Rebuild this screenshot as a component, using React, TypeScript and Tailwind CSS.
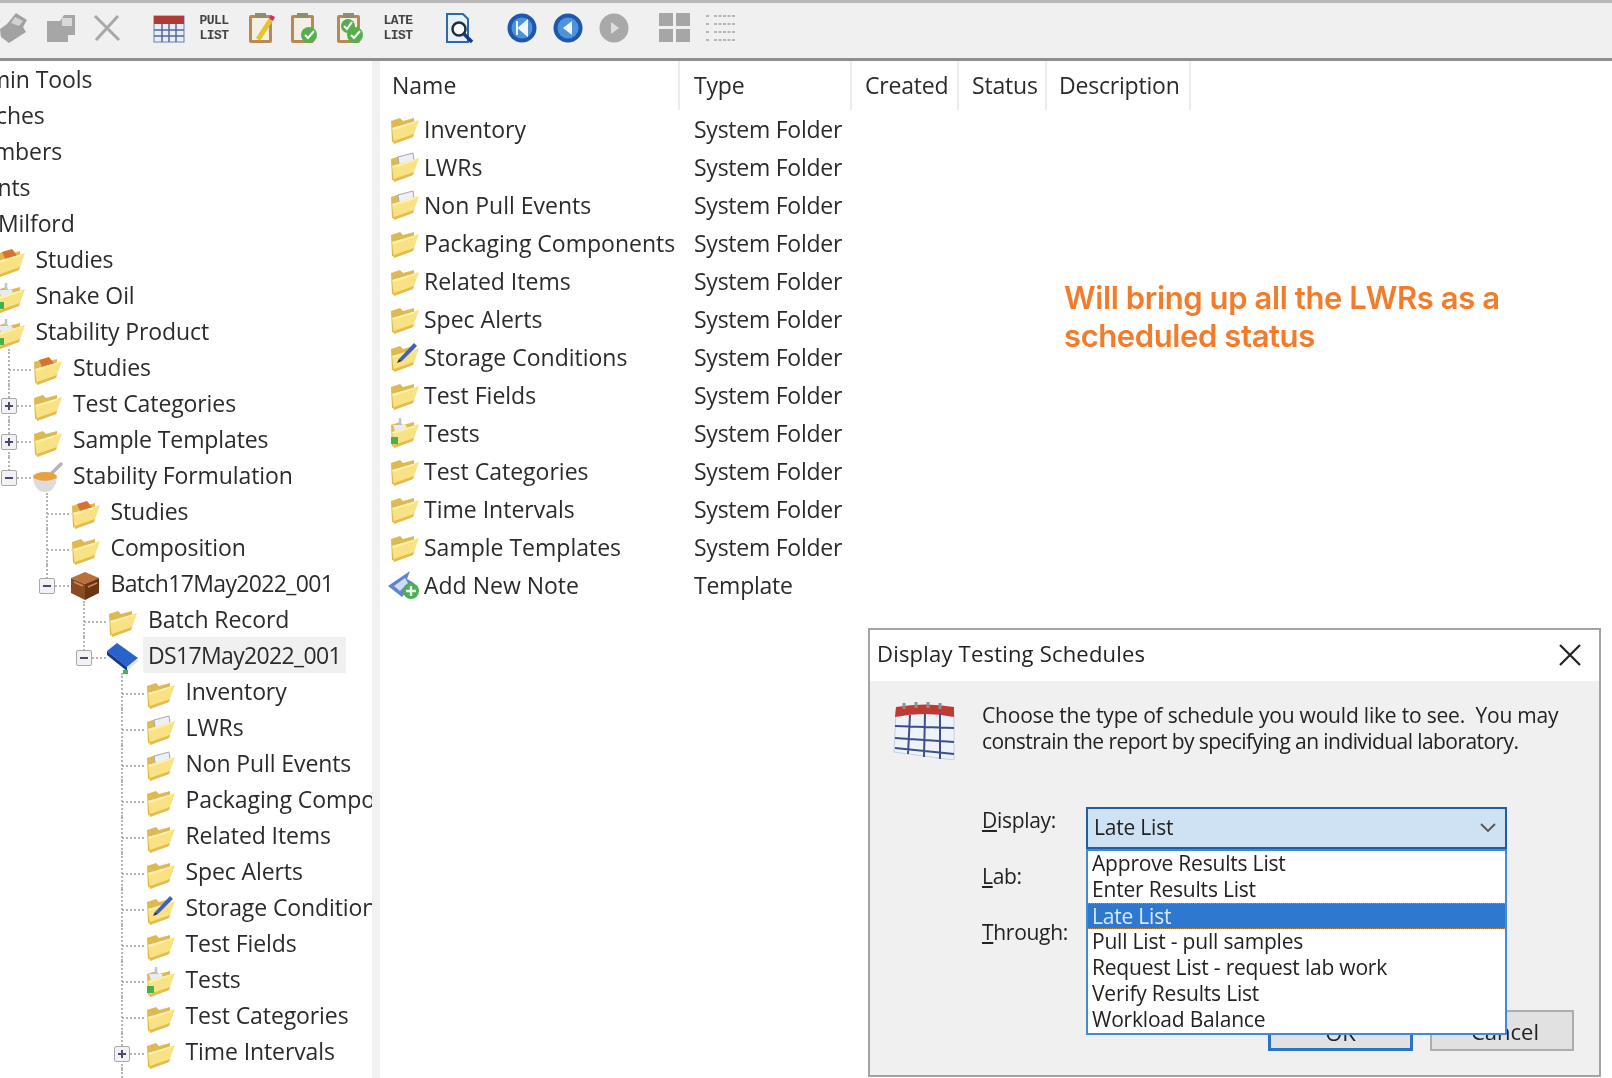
import type { ReactNode } from 'react';

type FolderKind = 'plain' | 'doc' | 'pen' | 'tests' | 'studies';
type IconKind = FolderKind | 'batch' | 'book' | 'mortar' | 'note';

type TreeRow = {
  label: string;
  level: number;
  icon?: IconKind;
  toggle?: '+' | '-';
  line?: 'full' | 'half' | 'none';
  selected?: boolean;
};

const tree: TreeRow[] = [
  { label: 'Admin Tools', level: -2, line: 'none' },
  { label: 'Batches', level: -2, line: 'none' },
  { label: 'Members', level: -2, line: 'none' },
  { label: 'Events', level: -2, line: 'none' },
  { label: 'Milford', level: -1, line: 'none' },
  { label: 'Studies', level: 0, icon: 'studies', line: 'none' },
  { label: 'Snake Oil', level: 0, icon: 'tests', line: 'none' },
  { label: 'Stability Product', level: 0, icon: 'tests', line: 'none' },
  { label: 'Studies', level: 1, icon: 'studies' },
  { label: 'Test Categories', level: 1, icon: 'plain', toggle: '+' },
  { label: 'Sample Templates', level: 1, icon: 'plain', toggle: '+' },
  { label: 'Stability Formulation', level: 1, icon: 'mortar', toggle: '-', line: 'half' },
  { label: 'Studies', level: 2, icon: 'studies' },
  { label: 'Composition', level: 2, icon: 'plain' },
  { label: 'Batch17May2022_001', level: 2, icon: 'batch', toggle: '-', line: 'half' },
  { label: 'Batch Record', level: 3, icon: 'plain' },
  { label: 'DS17May2022_001', level: 3, icon: 'book', toggle: '-', line: 'half', selected: true },
  { label: 'Inventory', level: 4, icon: 'plain' },
  { label: 'LWRs', level: 4, icon: 'doc' },
  { label: 'Non Pull Events', level: 4, icon: 'doc' },
  { label: 'Packaging Components', level: 4, icon: 'plain' },
  { label: 'Related Items', level: 4, icon: 'plain' },
  { label: 'Spec Alerts', level: 4, icon: 'plain' },
  { label: 'Storage Conditions', level: 4, icon: 'pen' },
  { label: 'Test Fields', level: 4, icon: 'plain' },
  { label: 'Tests', level: 4, icon: 'tests' },
  { label: 'Test Categories', level: 4, icon: 'plain' },
  { label: 'Time Intervals', level: 4, icon: 'plain', toggle: '+' },
  { label: 'Sample Templates', level: 4, icon: 'plain' },
];

const listRows: { name: string; type: string; icon: IconKind }[] = [
  { name: 'Inventory', type: 'System Folder', icon: 'plain' },
  { name: 'LWRs', type: 'System Folder', icon: 'doc' },
  { name: 'Non Pull Events', type: 'System Folder', icon: 'doc' },
  { name: 'Packaging Components', type: 'System Folder', icon: 'plain' },
  { name: 'Related Items', type: 'System Folder', icon: 'plain' },
  { name: 'Spec Alerts', type: 'System Folder', icon: 'plain' },
  { name: 'Storage Conditions', type: 'System Folder', icon: 'pen' },
  { name: 'Test Fields', type: 'System Folder', icon: 'plain' },
  { name: 'Tests', type: 'System Folder', icon: 'tests' },
  { name: 'Test Categories', type: 'System Folder', icon: 'plain' },
  { name: 'Time Intervals', type: 'System Folder', icon: 'plain' },
  { name: 'Sample Templates', type: 'System Folder', icon: 'plain' },
  { name: 'Add New Note', type: 'Template', icon: 'note' },
];

const scheduleOptions = [
  'Approve Results List',
  'Enter Results List',
  'Late List',
  'Pull List - pull samples',
  'Request List - request lab work',
  'Verify Results List',
  'Workload Balance',
];

// 32x32 tree / list icons
const RowIcon = ({ kind }: { kind: IconKind }) => {
  if (kind === 'batch') {
    return (
      <svg viewBox="0 0 32 32" className="h-8 w-8 shrink-0">
        <path d="M2 8 L16 2 L30 8 L16 14 Z" fill="#b9703a" />
        <path d="M2 8 L16 14 V30 L2 23 Z" fill="#8a4a20" />
        <path d="M30 8 L16 14 V30 L30 23 Z" fill="#6b3413" />
        <path d="M5 12 L14 16 M19 17 L28 13" stroke="#c98a56" strokeWidth="1.5" />
      </svg>
    );
  }
  if (kind === 'book') {
    return (
      <svg viewBox="0 0 32 32" className="h-8 w-8 shrink-0">
        <path d="M1 9 L11 1 L32 16 L21 25 Z" fill="#2a62c9" />
        <path d="M1 9 L21 25 L21 29 L1 13 Z" fill="#123a8c" />
        <path d="M21 25 L32 16 V19 L21 29 Z" fill="#dfe6f2" />
        <rect x="17" y="28" width="5" height="4" fill="#46b04a" />
      </svg>
    );
  }
  if (kind === 'mortar') {
    return (
      <svg viewBox="0 0 32 32" className="h-8 w-8 shrink-0">
        <path d="M19 13 L30 2" stroke="#b5b5b5" strokeWidth="3.5" strokeLinecap="round" />
        <ellipse cx="14" cy="15" rx="12" ry="5" fill="#e9a13f" />
        <path d="M2 15 C3 26 8 30 14 30 C20 30 25 26 26 15 C22 20 6 20 2 15 Z" fill="#dcdcdc" />
      </svg>
    );
  }
  if (kind === 'note') {
    return (
      <svg viewBox="0 0 32 32" className="h-8 w-8 shrink-0">
        <path d="M0 17 L22 2 L19 10 L26 14 L14 28 Z" fill="#5f86c9" />
        <path d="M6 17 L17 9 L20 14 L12 22 Z" fill="#cfdcf2" />
        <circle cx="23" cy="22" r="8" fill="#4fae52" />
        <path d="M23 17 V27 M18 22 H28" stroke="#e8f7e8" strokeWidth="2.4" />
      </svg>
    );
  }
  return (
    <svg viewBox="0 0 32 32" className="h-8 w-8 shrink-0">
      <path d="M3 8 L12 5 L15 8 L26 5 V13 L7 30 L4 29 Z" fill="#dfb850" />
      {kind === 'doc' && <path d="M10 6 L25 2 L27 16 L12 20 Z" fill="#eef0f4" stroke="#a8a8b0" strokeWidth="1" />}
      {kind === 'tests' && (
        <>
          <path d="M12 1 V14" stroke="#b8c4de" strokeWidth="2.5" />
          <path d="M5 8 L18 8 L20 16 L8 18 Z" fill="#e6ecf6" />
        </>
      )}
      {kind === 'studies' && <path d="M8 6 L18 3 L26 13 L14 19 Z" fill="#d9722a" />}
      <path d="M4 15 L11 13 L31 7 L25 24 L6 31 Z" fill="#f8e283" />
      <path d="M4 15 L11 13 L28 8 L27 10 L6 17 Z" fill="#fdf0ad" />
      <path d="M6 31 L25 24 L26 21 L6 28 Z" fill="#e6bb4b" />
      {kind === 'tests' && <rect x="3" y="20" width="7" height="7" fill="#46b04a" />}
      {kind === 'pen' && (
        <>
          <path d="M11 18 L26 2 L29 5 L14 20 Z" fill="#3f62b8" />
          <path d="M11 18 L9 22 L14 20 Z" fill="#222a4a" />
        </>
      )}
    </svg>
  );
};

const Toggle = ({ sign }: { sign: '+' | '-' }) => (
  <span className="absolute top-[13px] flex h-4 w-4 -translate-x-1/2 items-center justify-center rounded-[2px] border border-[#a9a9a9] bg-[#f2f2f4]">
    <span className="relative h-[2px] w-2 bg-[#4a4a70]">
      {sign === '+' && <span className="absolute left-[3px] top-[-3px] h-2 w-[2px] bg-[#4a4a70]" />}
    </span>
  </span>
);

const TreeItem = ({ row }: { row: TreeRow }) => {
  const iconLeft = 31 + (row.level - 1) * 37.5;
  const guideX = 9 + (row.level - 1) * 37.5;
  const line = row.line ?? 'full';
  const hasDigits = /\d/.test(row.label);
  return (
    <div className="relative flex h-9 shrink-0 items-center whitespace-nowrap">
      {line !== 'none' && (
        <>
          <span
            className={`absolute w-0 border-l-2 border-dotted border-[#b5b5b5] ${line === 'half' ? 'top-0 h-[18px]' : 'inset-y-0'}`}
            style={{ left: guideX - 1 }}
          />
          <span
            className="absolute top-[20px] h-0 border-t-2 border-dotted border-[#b5b5b5]"
            style={{ left: guideX, width: iconLeft - guideX }}
          />
        </>
      )}
      {row.toggle && (
        <span className="absolute inset-y-0" style={{ left: guideX }}>
          <Toggle sign={row.toggle} />
        </span>
      )}
      <div className="flex items-center" style={{ marginLeft: row.icon ? iconLeft : iconLeft + 32 }}>
        {row.icon && (
          <span className="mt-[5px]">
            <RowIcon kind={row.icon} />
          </span>
        )}
        <span
          className={`ml-[5px] h-9 px-[5px] leading-9 ${hasDigits ? 'tracking-[-0.65px]' : 'tracking-[-0.1px]'} ${
            row.selected ? 'bg-[#f0f0f0]' : ''
          }`}
        >
          {row.label}
        </span>
      </div>
    </div>
  );
};

const GreyStamp = () => (
  <svg viewBox="0 0 30 32" className="h-8 w-[30px]">
    <path d="M1 17 L8 12 L17 1 L28 8 L24 15 L27 20 L10 31 L2 25 Z" fill="#a2a2a2" />
    <path d="M16 5 L24 9 L20 14 L12 11 Z" fill="#d2d2d2" />
  </svg>
);

const GreyPaste = () => (
  <svg viewBox="0 0 32 30" className="h-[30px] w-8">
    <path d="M1 8 H14 L18 2 H29 V22 H22 V29 H1 Z" fill="#a6a6a6" />
    <path d="M16 5 H26 V13 H16 Z" fill="#d8d8d8" />
  </svg>
);

const GreyX = () => (
  <svg viewBox="0 0 28 28" className="h-[28px] w-[28px]">
    <path d="M2 2 L26 26 M25 2 L3 26" stroke="#a8a8a8" strokeWidth="3" />
  </svg>
);

const CalendarSmall = () => (
  <svg viewBox="0 0 32 30" className="h-[30px] w-8">
    <rect x="1" y="3" width="30" height="26" fill="#e8eef8" stroke="#6a7fb0" />
    <rect x="1" y="3" width="30" height="8" fill="#b23a34" />
    <path d="M1 17 H31 M1 23 H31 M9 11 V29 M16 11 V29 M23 11 V29" stroke="#55689c" strokeWidth="1.5" />
  </svg>
);

const Clipboard = ({ badge }: { badge: 'pen' | 'check' | 'double' }) => (
  <svg viewBox="0 0 30 32" className="h-8 w-[30px]">
    <rect x="2" y="3" width="23" height="28" rx="2" fill="#b58a55" />
    <rect x="5" y="6" width="17" height="22" fill="#f3efe2" />
    <rect x="8" y="1" width="11" height="5" fill="#8d8d70" />
    {badge === 'pen' && <path d="M9 26 L22 6 L26 9 L13 29 Z" fill="#e6c22c" />}
    {badge === 'pen' && <path d="M22 6 L26 9 L28 5 L24 3 Z" fill="#c9326a" />}
    {badge !== 'pen' && <circle cx="20" cy="23" r="8" fill="#57ad4f" />}
    {badge !== 'pen' && <path d="M16 23 L19 26 L25 19" stroke="#fff" strokeWidth="2" fill="none" />}
    {badge === 'double' && <circle cx="13" cy="14" r="7" fill="#57ad4f" />}
    {badge === 'double' && <path d="M9 14 L12 17 L17 10" stroke="#fff" strokeWidth="2" fill="none" />}
  </svg>
);

const Magnifier = () => (
  <svg viewBox="0 0 30 32" className="h-8 w-[30px]">
    <path d="M2 2 H18 L23 7 V30 H2 Z" fill="#e9f0f8" stroke="#2b6aa8" strokeWidth="2" />
    <circle cx="14" cy="17" r="6.5" fill="#fff" stroke="#1c2f4a" strokeWidth="2.5" />
    <path d="M19 22 L27 30" stroke="#173a86" strokeWidth="3.5" />
  </svg>
);

const NavCircle = ({ kind }: { kind: 'first' | 'back' | 'next' }) => (
  <svg viewBox="0 0 30 30" className="h-[30px] w-[30px]">
    <circle cx="15" cy="15" r="14.5" fill={kind === 'next' ? '#a9a9a9' : '#1f57ad'} />
    {kind !== 'next' && <circle cx="15" cy="15" r="10.5" fill="#4b94dc" />}
    {kind === 'first' && <path d="M10 8 V22 M20 8 L12 15 L20 22 Z" stroke="#f2f6fc" strokeWidth="2" fill="#f2f6fc" />}
    {kind === 'back' && <path d="M19 8 L10 15 L19 22 Z" fill="#f2f6fc" />}
    {kind === 'next' && <path d="M12 9 L20 15 L12 21 Z" fill="#dcdcdc" />}
  </svg>
);

const GridIcon = () => (
  <svg viewBox="0 0 32 30" className="h-[30px] w-8" fill="#a6a6a6">
    <rect x="0" y="0" width="14" height="13" />
    <rect x="17" y="0" width="14" height="13" />
    <rect x="0" y="16" width="14" height="13" />
    <rect x="17" y="16" width="14" height="13" />
  </svg>
);

const ListIcon = () => (
  <svg viewBox="0 0 32 30" className="h-[30px] w-8" stroke="#b5b5b5" strokeWidth="2" strokeDasharray="3 1.5">
    <path d="M1 3 H5 M9 3 H31 M1 11 H5 M9 11 H31 M1 19 H5 M9 19 H31 M1 27 H5 M9 27 H31" />
  </svg>
);

const ToolLabel = ({ top, bottom }: { top: string; bottom: string }) => (
  <div className="flex w-[30px] flex-col items-center font-['Liberation_Mono',monospace] text-[13px] font-bold leading-[15px] tracking-[-0.5px] text-[#444]">
    <span>{top}</span>
    <span>{bottom}</span>
  </div>
);

const Tool = ({ className, children }: { className: string; children: ReactNode }) => (
  <div className={`flex shrink-0 items-center ${className}`}>{children}</div>
);

const CalendarLarge = () => (
  <svg viewBox="0 0 66 58" className="h-[58px] w-[66px]">
    <path d="M4 9 H62 V58 L2 50 Z" fill="#eef3fa" stroke="#c3cfe2" />
    <path d="M4 5 Q33 0 62 5 V15 Q33 9 3 15 Z" fill="#bf3a33" />
    <path d="M12 1 V7 M24 0 V6 M36 0 V6 M48 1 V7" stroke="#8f8f8f" strokeWidth="3" />
    <path d="M3 24 L62 26 M3 36 L62 40 M3 46 L62 52 M18 13 L16 52 M33 12 L32 55 M48 12 L48 57" stroke="#3d4f86" strokeWidth="2" />
  </svg>
);

const Dialog = () => (
  <div className="absolute left-[868px] top-[628px] flex h-[449px] w-[733px] flex-col border-2 border-[#a3a3a3] bg-[#f0f0f0] font-['Open_Sans',sans-serif] text-[#222]">
    <div className="flex h-[51px] shrink-0 items-center justify-between bg-white pb-[4px] pl-[7px] pr-[17px]">
      <span className="text-[22px] tracking-[0.2px]">Display Testing Schedules</span>
      <svg viewBox="0 0 24 24" className="mt-[2px] h-6 w-6" stroke="#222" strokeWidth="2.2">
        <path d="M2 2 L22 22 M22 2 L2 22" />
      </svg>
    </div>
    <div className="flex grow flex-col pb-[24px] pl-[22px] pr-[25px] pt-[21px]">
      <div className="flex">
        <CalendarLarge />
        <div className="ml-[24px] flex flex-col whitespace-pre text-[21px] leading-[26px] text-[#222]">
          <span className="tracking-[-0.2px]">Choose the type of schedule you would like to see.  You may</span>
          <span className="tracking-[-0.58px]">constrain the report by specifying an individual laboratory.</span>
        </div>
      </div>
      <div className="ml-[90px] mt-[46px] flex">
        <div className="flex w-[104px] flex-col gap-[28px] text-[21px] leading-[28px] tracking-[-0.3px]">
          <span><span className="underline">D</span>isplay:</span>
          <span><span className="underline">L</span>ab:</span>
          <span><span className="underline">T</span>hrough:</span>
        </div>
        <div className="relative mt-[1px] w-[421px]">
          <div className="flex h-[42px] items-center justify-between border-2 border-[#1d5ea6] bg-[#cfe2f3] pl-[6px] pr-[8px] text-[21px] tracking-[-0.2px]">
            <span>Late List</span>
            <svg viewBox="0 0 18 12" className="h-3 w-[18px]" stroke="#555" strokeWidth="1.8" fill="none">
              <path d="M2 2 L9 9 L16 2" />
            </svg>
          </div>
          <div className="absolute left-0 top-[42px] z-10 w-full border-2 border-[#3f8ad9] bg-white">
            {scheduleOptions.map((option) => (
              <div
                key={option}
                className={`h-[26px] whitespace-nowrap pl-[4px] text-[21px] leading-[25px] tracking-[-0.2px] ${
                  option === 'Late List' ? 'border-y border-dotted border-[#c98d3c] bg-[#2f78cf] text-[#dbe9fa]' : ''
                }`}
              >
                {option}
              </div>
            ))}
          </div>
        </div>
      </div>
      <div className="mt-auto flex justify-end gap-[17px]">
        <div className="flex h-[41px] w-[145px] items-center justify-center border-[3px] border-[#2a73c8] bg-[#e1e1e1] pt-[3px] text-[22px]">OK</div>
        <div className="flex h-[41px] w-[144px] items-center justify-center border-2 border-[#adadad] bg-[#e1e1e1] pl-[6px] pt-[2px] text-[22px]">Cancel</div>
      </div>
    </div>
  </div>
);

export default function App() {
  return (
    <div className="relative flex h-[1078px] w-[1612px] flex-col overflow-hidden bg-white font-['Open_Sans',sans-serif] text-[#2b2b2b] blur-[0.4px]">
      {/* toolbar */}
      <header className="flex h-[61px] shrink-0 items-center border-b-[3px] border-t-[3px] border-b-[#8f8f8f] border-t-[#b9b9b9] bg-[#f0f0f0] pb-[6px]">
        <Tool className="ml-[-1px]"><GreyStamp /></Tool>
        <Tool className="ml-[17px]"><GreyPaste /></Tool>
        <Tool className="ml-[15px]"><GreyX /></Tool>
        <Tool className="ml-[32px]"><CalendarSmall /></Tool>
        <Tool className="ml-[14px]"><ToolLabel top="PULL" bottom="LIST" /></Tool>
        <Tool className="ml-[18px]"><Clipboard badge="pen" /></Tool>
        <Tool className="ml-[12px]"><Clipboard badge="check" /></Tool>
        <Tool className="ml-[16px]"><Clipboard badge="double" /></Tool>
        <Tool className="ml-[18px]"><ToolLabel top="LATE" bottom="LIST" /></Tool>
        <Tool className="ml-[32px]"><Magnifier /></Tool>
        <Tool className="ml-[32px]"><NavCircle kind="first" /></Tool>
        <Tool className="ml-[16px]"><NavCircle kind="back" /></Tool>
        <Tool className="ml-[16px]"><NavCircle kind="next" /></Tool>
        <Tool className="ml-[30px]"><GridIcon /></Tool>
        <Tool className="ml-[14px]"><ListIcon /></Tool>
      </header>

      <div className="flex min-h-0 grow">
        {/* tree */}
        <nav className="flex w-[372px] shrink-0 flex-col overflow-hidden text-[23px]">
          {tree.map((row, i) => (
            <TreeItem key={i} row={row} />
          ))}
        </nav>
        <div className="w-2 shrink-0 bg-[#f0f0f0]" />

        {/* list */}
        <main className="min-w-0 grow text-[23px]">
          <div className="flex h-[49px] items-center">
            <div className="flex h-full w-[300px] items-center border-r-2 border-[#ececec] pl-[12px]">Name</div>
            <div className="flex h-full w-[172px] items-center border-r-2 border-[#ececec] pl-[14px] tracking-[-0.2px]">Type</div>
            <div className="flex h-full w-[107px] items-center border-r-2 border-[#ececec] pl-[13px] tracking-[-0.2px]">Created</div>
            <div className="flex h-full w-[88px] items-center border-r-2 border-[#ececec] pl-[13px] tracking-[-0.2px]">Status</div>
            <div className="flex h-full w-[144px] items-center border-r-2 border-[#ececec] pl-[12px] tracking-[-0.2px]">Description</div>
          </div>
          {listRows.map((row) => (
            <div key={row.name} className="flex h-[38px] items-center">
              <div className="flex w-[300px] items-center pl-[8px]">
                <RowIcon kind={row.icon} />
                <span className="ml-[4px] whitespace-nowrap">{row.name}</span>
              </div>
              <div className="pl-[14px] tracking-[-0.25px]">{row.type}</div>
            </div>
          ))}
        </main>
      </div>

      <p className="absolute left-[1064px] top-[279px] font-['Inter',sans-serif] text-[31px] font-semibold leading-[38px] tracking-[-0.4px] text-[#f37c2b]">
        Will bring up all the LWRs as a
        <br />
        scheduled status
      </p>

      <Dialog />
    </div>
  );
}
